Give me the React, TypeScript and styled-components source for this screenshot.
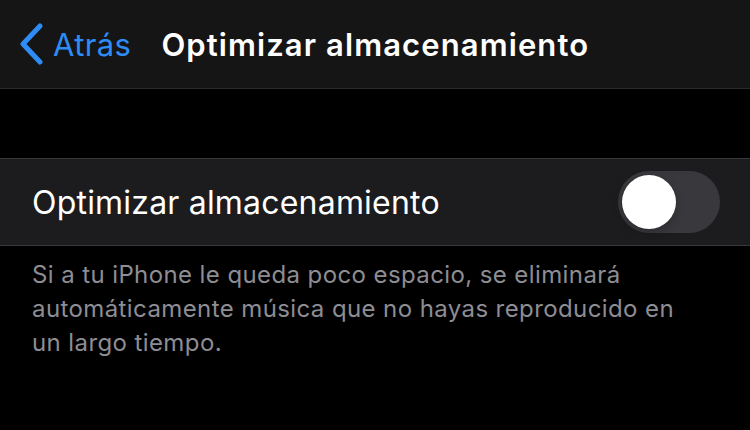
import styled, { createGlobalStyle } from 'styled-components';

const GlobalStyle = createGlobalStyle`
    html, body {
        margin: 0;
        padding: 0;
        background: #000;
    }
    body {
        font-family: Inter, "Noto Sans", "Liberation Sans", sans-serif;
        -webkit-font-smoothing: antialiased;
    }
`;

const Screen = styled.div`
    width: 750px;
    height: 430px;
    background: #000;
    display: flex;
    flex-direction: column;
    overflow: hidden;
`;

const NavBar = styled.header`
    height: 89px;
    box-sizing: border-box;
    background: #151515;
    border-bottom: 1px solid #2a2a2c;
    display: flex;
    align-items: center;
    padding-left: 18px;
`;

const BackButton = styled.button`
    display: flex;
    align-items: center;
    gap: 9px;
    background: none;
    border: none;
    padding: 0;
    color: #2e8cf5;
    font-family: inherit;
    font-size: 31px;
    letter-spacing: 0.4px;
    cursor: pointer;
`;

const NavTitle = styled.h1`
    margin: 0 0 0 30px;
    color: #fff;
    font-size: 31px;
    font-weight: 600;
    letter-spacing: 1.1px;
`;

const Group = styled.section`
    margin-top: 69px;
    background: #1c1c1e;
    border-top: 1px solid #38383a;
    border-bottom: 1px solid #38383a;
`;

const Row = styled.div`
    height: 86px;
    display: flex;
    align-items: center;
    justify-content: space-between;
    padding: 0 30px 0 32px;
`;

const RowLabel = styled.span`
    color: #fff;
    font-size: 32px;
    font-weight: 400;
    letter-spacing: 0.2px;
`;

const Switch = styled.div<{ $on: boolean }>`
    position: relative;
    width: 102px;
    height: 62px;
    border-radius: 31px;
    background: ${props => (props.$on ? '#30d158' : '#39393d')};
`;

const Knob = styled.div<{ $on: boolean }>`
    position: absolute;
    top: 4px;
    left: ${props => (props.$on ? '44px' : '4px')};
    width: 54px;
    height: 54px;
    border-radius: 50%;
    background: #fff;
    box-shadow: 0 3px 8px rgba(0, 0, 0, 0.25);
`;

const Footer = styled.p`
    margin: 12px 0 0;
    padding: 0 32px;
    color: #8d8d93;
    font-size: 24px;
    line-height: 34px;
    letter-spacing: 0.4px;
    max-width: 670px;
`;

const Chevron = () => (
    <svg width="26" height="42" viewBox="0 0 26 42" fill="none">
        <path d="M22 3 L5 21 L22 39" stroke="#2e8cf5" strokeWidth="5" strokeLinecap="round" strokeLinejoin="round" />
    </svg>
);

const App = () => {
    const on = false;

    return (
        <Screen>
            <GlobalStyle />
            <NavBar>
                <BackButton>
                    <Chevron />
                    Atrás
                </BackButton>
                <NavTitle>Optimizar almacenamiento</NavTitle>
            </NavBar>
            <Group>
                <Row>
                    <RowLabel>Optimizar almacenamiento</RowLabel>
                    <Switch $on={on}>
                        <Knob $on={on} />
                    </Switch>
                </Row>
            </Group>
            <Footer>
                Si a tu iPhone le queda poco espacio, se eliminará automáticamente música que no hayas reproducido en
                un largo tiempo.
            </Footer>
        </Screen>
    );
};

export default App;
